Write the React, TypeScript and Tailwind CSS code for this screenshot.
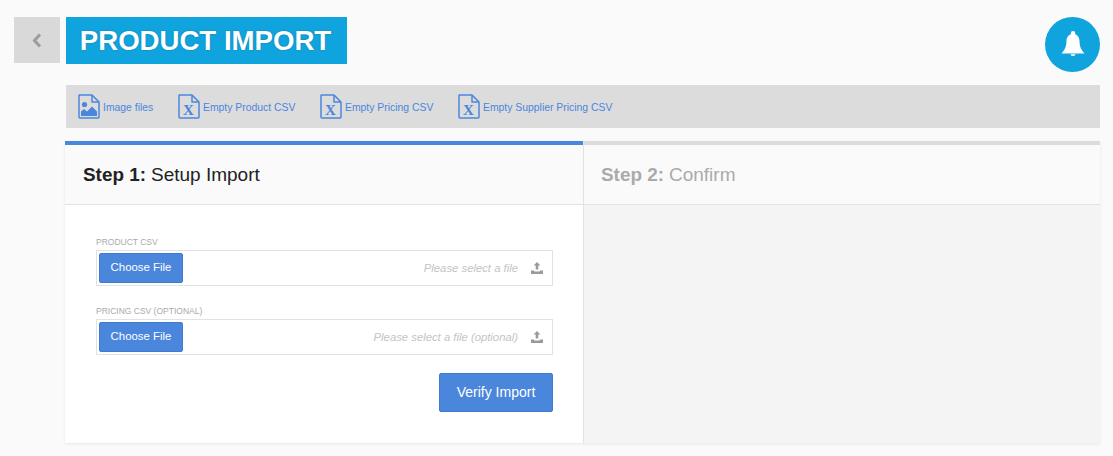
const FileIcon = ({ kind }: { kind: 'image' | 'excel' }) => (
  <svg width="22" height="25" viewBox="0 0 22 25" fill="none" className="shrink-0">
    <path
      d="M1.5 1h12.5l7 7v15a1 1 0 0 1-1 1H2a1 1 0 0 1-1-1V1.5a.5.5 0 0 1 .5-.5z"
      stroke="#4a86dc"
      strokeWidth="1.5"
      strokeLinejoin="round"
    />
    <path d="M14 1v7h7" stroke="#4a86dc" strokeWidth="1.5" strokeLinejoin="round" />
    {kind === 'image' ? (
      <>
        <circle cx="6.5" cy="10.5" r="2.6" fill="#4a86dc" />
        <path d="M3 22v-4.5l3-2.5 3 2.5 5-5 5 5V22z" fill="#4a86dc" />
      </>
    ) : (
      <text
        x="10.5"
        y="21"
        textAnchor="middle"
        fill="#4a86dc"
        fontSize="15"
        fontWeight="700"
        fontFamily="'Liberation Serif', serif"
      >
        X
      </text>
    )}
  </svg>
);

const UploadIcon = () => (
  <svg width="12" height="12" viewBox="0 0 12 12" className="shrink-0">
    <path d="M6 0l3.4 3.6H7.3V7.6H4.7V3.6H2.6z" fill="#9a9a9a" />
    <path d="M0 8.5h3.2v1h5.6v-1H12V12H0z" fill="#9a9a9a" />
  </svg>
);

const BellIcon = () => (
  <svg width="24" height="26" viewBox="0 0 24 26" fill="#ffffff">
    <circle cx="12" cy="2.2" r="2.2" />
    <path d="M12 3C7.5 3 5.5 6.5 5.5 10c0 6-2 9-5 12.5h23c-3-3.5-5-6.5-5-12.5 0-3.5-2-7-6.5-7z" />
    <path d="M9.5 23.2a2.6 2.6 0 0 0 5 0z" />
  </svg>
);

const FileLink = ({ kind, label, className }: { kind: 'image' | 'excel'; label: string; className: string }) => (
  <a className={`flex items-center gap-[3px] text-[10.4px] text-[#4a86dc] ${className}`}>
    <FileIcon kind={kind} />
    <span className="pt-[2px]">{label}</span>
  </a>
);

const FileField = ({ label, placeholder }: { label: string; placeholder: string }) => (
  <div>
    <label className="block text-[8.5px] leading-[10px] text-[#aaaaaa] mb-[3px]">{label}</label>
    <div className="flex items-center justify-between h-[36px] border border-[#e2e2e2] bg-white pl-[2px] pr-[9px]">
      <button className="h-[30px] w-[84px] rounded-[2px] border border-[#3f7bd0] bg-[#4a86dc] text-[11.4px] text-white">
        Choose File
      </button>
      <div className="flex items-center gap-[13px]">
        <span className="text-[11.3px] italic text-[#c4c4c4]">{placeholder}</span>
        <UploadIcon />
      </div>
    </div>
  </div>
);

export default function App() {
  return (
    <div
      className="h-[456px] w-[1113px] overflow-hidden bg-[#fafafa] pl-[14px] pr-[13px] pt-[17px] text-[#222222]"
      style={{ fontFamily: "'Liberation Sans', Arial, sans-serif" }}
    >
      <header className="flex items-start">
        <button className="flex h-[46px] w-[46px] items-center justify-center bg-[#d9d9d9]">
          <svg width="10" height="15" viewBox="0 0 10 15" fill="none">
            <path d="M8 1.5L2.5 7.5 8 13.5" stroke="#9c9c9c" strokeWidth="3" />
          </svg>
        </button>
        <h1 className="ml-[6px] flex h-[47px] w-[281px] items-center justify-center bg-[#10a4de] pr-[2px] text-[27.6px] font-bold text-white [text-shadow:0_0_2px_rgba(0,0,0,0.25)]">
          PRODUCT IMPORT
        </h1>
        <div className="ml-auto flex h-[55px] w-[55px] items-center justify-center rounded-full bg-[#10a4de] pb-[1px]">
          <BellIcon />
        </div>
      </header>

      <main className="ml-[51px] mt-[13px]">
        <nav className="ml-[1px] flex h-[43px] items-center bg-[#dcdcdc] pl-[12px]">
          <FileLink kind="image" label="Image files" className="w-[100px]" />
          <FileLink kind="excel" label="Empty Product CSV" className="w-[142px]" />
          <FileLink kind="excel" label="Empty Pricing CSV" className="w-[138px]" />
          <FileLink kind="excel" label="Empty Supplier Pricing CSV" className="" />
        </nav>

        <section className="mt-[13px] h-[302px] bg-white shadow-[0_1px_3px_rgba(0,0,0,0.08)]">
          <div className="grid h-full grid-cols-[518px_1fr]">
            <div className="flex flex-col">
              <div className="flex h-[64px] items-center border-t-[4px] border-b border-t-[#4a86dc] border-b-[#e2e2e2] bg-[#fafafa] pl-[18px] pt-[1px] text-[19px]">
                <strong className="mr-[5px] text-[18.9px]">Step 1:</strong> Setup Import
              </div>
              <div className="flex flex-col pl-[31px] pr-[30px] pt-[32px]">
                <div className="flex flex-col gap-[20px]">
                  <FileField label="PRODUCT CSV" placeholder="Please select a file" />
                  <FileField label="PRICING CSV (OPTIONAL)" placeholder="Please select a file (optional)" />
                </div>
                <button className="mt-[18px] h-[39px] w-[114px] self-end rounded-[2px] border border-[#3f7bd0] bg-[#4a86dc] text-[14px] text-white">
                  Verify Import
                </button>
              </div>
            </div>
            <div className="flex flex-col border-l border-[#e2e2e2] bg-[#f4f4f4]">
              <div className="flex h-[64px] items-center border-t-[4px] border-b border-t-[#dcdcdc] border-b-[#e2e2e2] bg-[#fafafa] pl-[17px] pt-[1px] text-[19px] text-[#aaaaaa]">
                <strong className="mr-[5px] text-[18.9px]">Step 2:</strong> Confirm
              </div>
            </div>
          </div>
        </section>
      </main>
    </div>
  );
}
